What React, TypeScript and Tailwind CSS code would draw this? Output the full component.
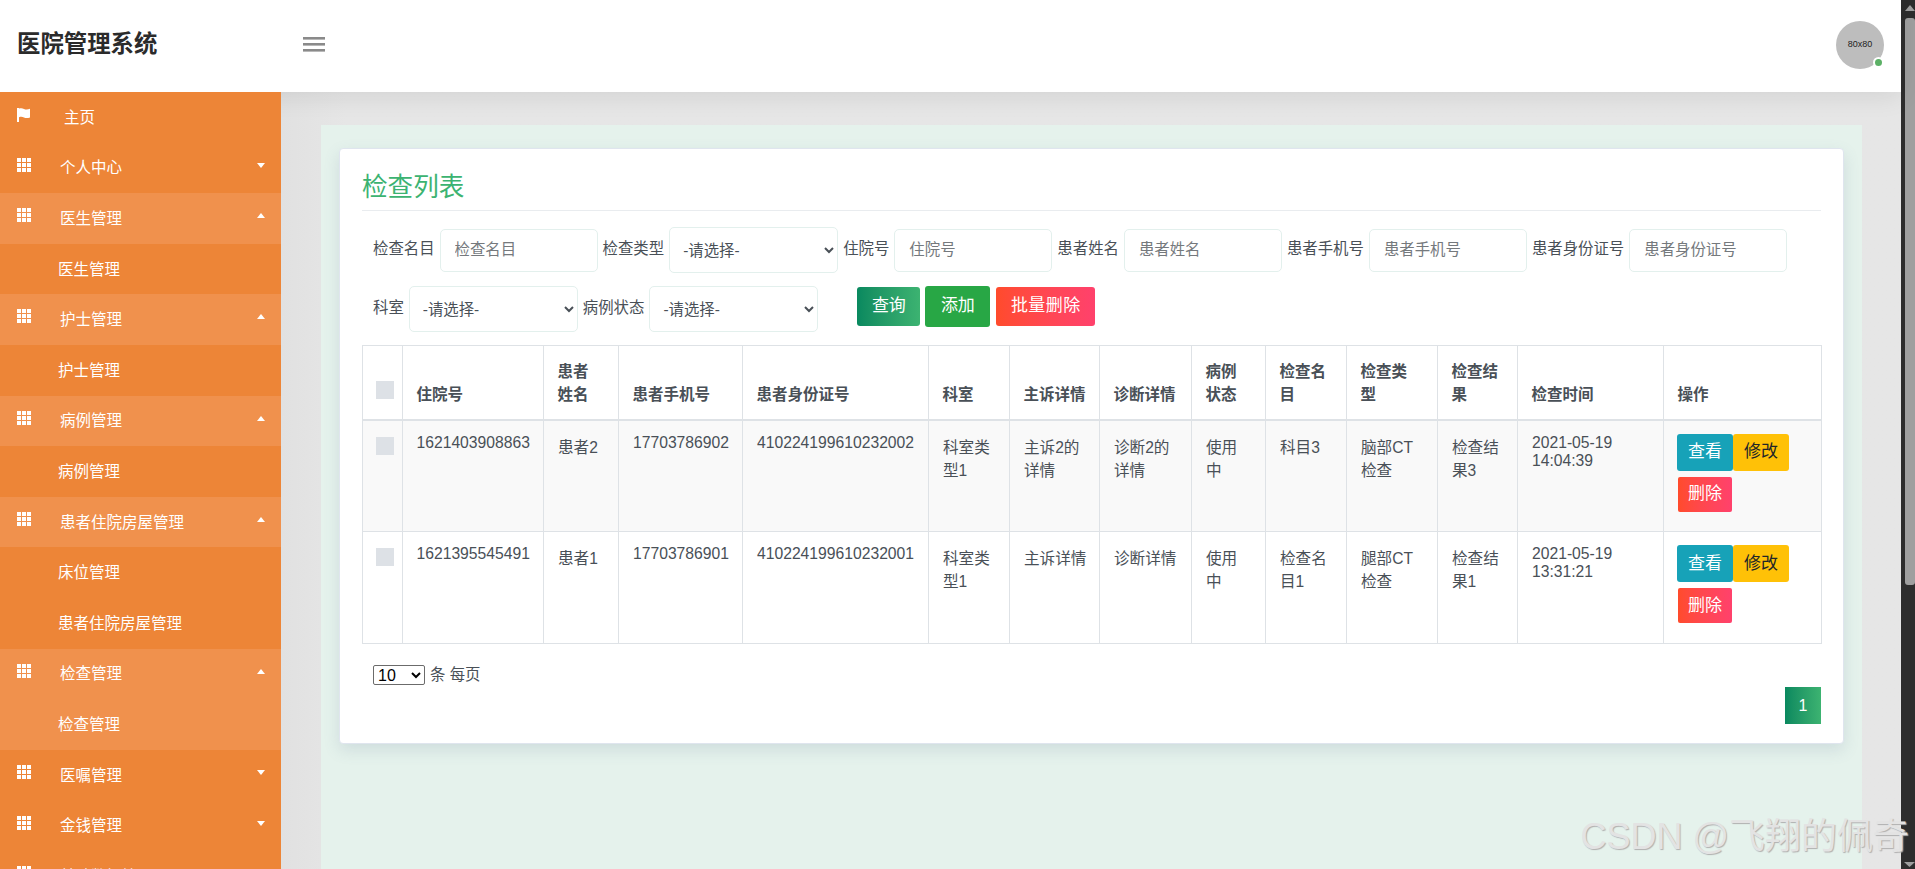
const font = { fontFamily: '"Liberation Sans", "Noto Sans CJK SC", sans-serif' };

interface NavItem {
    label: string;
    kind: "home" | "group" | "sub";
    open?: boolean;
    active?: boolean;
}

const navItems: NavItem[] = [
    { label: "主页", kind: "home" },
    { label: "个人中心", kind: "group" },
    { label: "医生管理", kind: "group", open: true, active: true },
    { label: "医生管理", kind: "sub" },
    { label: "护士管理", kind: "group", open: true, active: true },
    { label: "护士管理", kind: "sub" },
    { label: "病例管理", kind: "group", open: true, active: true },
    { label: "病例管理", kind: "sub" },
    { label: "患者住院房屋管理", kind: "group", open: true, active: true },
    { label: "床位管理", kind: "sub" },
    { label: "患者住院房屋管理", kind: "sub" },
    { label: "检查管理", kind: "group", open: true, active: true },
    { label: "检查管理", kind: "sub", active: true },
    { label: "医嘱管理", kind: "group" },
    { label: "金钱管理", kind: "group" },
    { label: "基础数据管理", kind: "group" },
];

const rows = [
    {
        id: "1621403908863", name: "患者2", phone: "17703786902", card: "410224199610232002",
        complaint: "主诉2的详情", diagnosis: "诊断2的详情", item: "科目3", type: "脑部CT检查",
        result: "检查结果3", date: "2021-05-19", time: "14:04:39", bg: "bg-[#f9f9f9]",
    },
    {
        id: "1621395545491", name: "患者1", phone: "17703786901", card: "410224199610232001",
        complaint: "主诉详情", diagnosis: "诊断详情", item: "检查名目1", type: "腿部CT检查",
        result: "检查结果1", date: "2021-05-19", time: "13:31:21", bg: "bg-white",
    },
];

const headers = ["住院号", "患者\n姓名", "患者手机号", "患者身份证号", "科室", "主诉详情", "诊断详情", "病例\n状态", "检查名\n目", "检查类\n型", "检查结\n果", "检查时间", "操作"];
const colWidths = [40, 141, 75, 124, 186, 81, 90, 92, 74, 81, 91, 80, 146, 158];

function GridIcon() {
    const cells = [0, 5, 10];
    return (
        <svg width="14" height="14" viewBox="0 0 14 14" className="absolute left-[17px] top-[15px]" fill="#fff">
            {cells.map((y) => cells.map((x) => <rect key={`${x}-${y}`} x={x} y={y} width="4" height="4" />))}
        </svg>
    );
}

function FlagIcon() {
    return (
        <svg width="14" height="14" viewBox="0 0 14 14" className="absolute left-[17px] top-[16px]" fill="#fff">
            <path d="M0 0h2v14H0z" />
            <path d="M2 .6c2-.8 3.4-.5 5 .3 1.6.7 3.6.8 6-.1v8.6c-2.4.9-4.4.8-6 .1-1.6-.8-3-1.1-5-.3z" />
        </svg>
    );
}

function Field({ label, width = "w-[158px]" }: { label: string; width?: string }) {
    return (
        <>
            <span className="text-[15.4px] leading-[23px] text-[#495057] -mt-[3px]">{label}</span>
            <input
                placeholder={label}
                className={`${width} h-[43px] rounded-[5px] border border-[#e3f0ed] bg-white px-[14px] text-[15.4px] text-[#495057] outline-none placeholder:text-[#75797d]`}
            />
        </>
    );
}

function Choice({ label }: { label: string }) {
    return (
        <>
            <span className="text-[15.4px] leading-[23px] text-[#495057] -mt-[3px]">{label}</span>
            <select className="w-[169px] h-[46px] rounded-[5px] border border-[#e3f0ed] bg-white pl-[9px] pr-1 text-[15.4px] text-[#495057] outline-none">
                <option>-请选择-</option>
            </select>
        </>
    );
}

function Cjk({ children }: { children: React.ReactNode }) {
    return <div className="pt-[2px] text-[15.6px] leading-[23px]">{children}</div>;
}

export default function App() {
    return (
        <div className="relative flex h-screen overflow-hidden bg-[#e6e6e6]" style={font}>
            <div className="flex min-w-0 flex-1 flex-col">
                {/* Header */}
                <header className="relative z-20 flex h-[92px] shrink-0 items-center bg-white shadow-[0_4px_24px_rgba(0,0,0,0.09)]">
                    <div className="w-[281px] pl-[17px] text-[23.4px] font-bold text-[#2b2b2b] -mt-[3px]">医院管理系统</div>
                    <svg width="22" height="15" viewBox="0 0 22 15" className="ml-[22px] -mt-[3px]" fill="#8a8a8a">
                        <rect x="0" y="0" width="22" height="2.6" />
                        <rect x="0" y="6" width="22" height="2.6" />
                        <rect x="0" y="12" width="22" height="2.6" />
                    </svg>
                    <div className="relative ml-auto mr-[17px] flex h-[48px] w-[48px] -mt-[2px] items-center justify-center rounded-full bg-[#bdbdbd] text-[9px] text-[#222]">
                        80x80
                        <span className="absolute bottom-[1px] right-[0px] box-content h-[7px] w-[7px] rounded-full border-2 border-white bg-[#5cb066]" />
                    </div>
                </header>

                <div className="flex min-h-0 flex-1">
                    {/* Sidebar */}
                    <aside className="relative z-30 w-[281px] shrink-0 overflow-hidden bg-[#ed8537] text-[15.5px] text-white">
                        {navItems.map((item, i) => (
                            <div
                                key={i}
                                className={`relative flex h-[50.62px] items-center ${item.active ? "bg-[#f0914d]" : ""} ${item.kind === "sub" ? "pl-[58px]" : item.kind === "home" ? "pl-[64px]" : "pl-[60px]"}`}
                            >
                                {item.kind === "home" && <FlagIcon />}
                                {item.kind === "group" && <GridIcon />}
                                <span>{item.label}</span>
                                {item.kind === "group" && (
                                    <svg width="8" height="5" viewBox="0 0 8 5" className="absolute right-[16px] top-[20px]" fill="#fff">
                                        <path d={item.open ? "M0 5 L4 0 L8 5 Z" : "M0 0 L8 0 L4 5 Z"} />
                                    </svg>
                                )}
                            </div>
                        ))}
                    </aside>

                    {/* Main */}
                    <main className="min-w-0 flex-1 bg-gradient-to-r from-[#e1e1e1] to-[#e6e6e6] to-[4%] px-[40px] pt-[33px] pr-[39px]">
                        <div className="h-full bg-[#e5f2ec] px-[18px] pt-[23px]">
                            <div className="h-[596px] rounded-[4px] border border-[#dfe5ee] bg-white px-[22px] shadow-[0_6px_16px_rgba(90,110,140,0.16)]">
                                <h2 className="flex h-[62px] items-end border-b border-[#e9ecef] pb-[5px] text-[25.6px] leading-[36px] text-[#3cb371]">检查列表</h2>

                                {/* Search form */}
                                <div className="mt-[16px] flex h-[46px] items-center gap-[5px] pl-[11px]">
                                    <Field label="检查名目" />
                                    <Choice label="检查类型" />
                                    <Field label="住院号" />
                                    <Field label="患者姓名" />
                                    <Field label="患者手机号" />
                                    <Field label="患者身份证号" />
                                </div>
                                <div className="mt-[13px] flex h-[46px] items-center gap-[5px] pl-[11px]">
                                    <Choice label="科室" />
                                    <Choice label="病例状态" />
                                    <button className="ml-[34px] h-[39px] w-[63px] -mt-[6px] rounded-[3px] bg-gradient-to-r from-[#08895f] to-[#3cb371] text-[17px] text-white">查询</button>
                                    <button className="h-[41px] w-[65px] -mt-[6px] rounded-[3px] bg-[#28a745] text-[17px] text-white">添加</button>
                                    <button className="h-[39px] w-[99px] -mt-[6px] ml-[1px] rounded-[3px] bg-gradient-to-r from-[#ff4b2b] to-[#ff416c] text-[17px] tracking-[0.5px] text-white">批量删除</button>
                                </div>

                                {/* Table */}
                                <table className="mt-[13px] w-[1460px] table-fixed border-collapse text-[15.7px] text-[#495057]">
                                    <colgroup>
                                        {colWidths.map((w, i) => (
                                            <col key={i} style={{ width: w }} />
                                        ))}
                                    </colgroup>
                                    <thead>
                                        <tr className="h-[74px]">
                                            <th className="border border-b-2 border-[#dee2e6] pl-[13px] pr-[8px] pb-[20px] align-bottom">
                                                <div className="h-[18px] w-[18px] bg-[#dde1e6]" />
                                            </th>
                                            {headers.map((h) => (
                                                <th key={h} className="whitespace-pre-line border border-b-2 border-[#dee2e6] pl-[13.5px] pr-[8px] pb-[13px] text-left align-bottom text-[15.5px] font-bold leading-[23px]">{h}</th>
                                            ))}
                                        </tr>
                                    </thead>
                                    <tbody>
                                        {rows.map((r) => (
                                            <tr key={r.id} className={`h-[112px] align-top leading-[18px] ${r.bg}`}>
                                                <td className="border border-[#dee2e6] pl-[13px] pr-[8px] pt-[16px]">
                                                    <div className="h-[18px] w-[18px] bg-[#dde1e6]" />
                                                </td>
                                                <td className="border border-[#dee2e6] pl-[13.5px] pr-[8px] pt-[13px]">{r.id}</td>
                                                <td className="border border-[#dee2e6] px-[14px] pt-[13px]"><Cjk>{r.name}</Cjk></td>
                                                <td className="border border-[#dee2e6] px-[14px] pt-[13px]">{r.phone}</td>
                                                <td className="border border-[#dee2e6] px-[14px] pt-[13px]">{r.card}</td>
                                                <td className="border border-[#dee2e6] px-[14px] pt-[13px]"><Cjk>科室类型1</Cjk></td>
                                                <td className="border border-[#dee2e6] pl-[14px] pr-[10px] pt-[13px]"><Cjk>{r.complaint}</Cjk></td>
                                                <td className="border border-[#dee2e6] pl-[14px] pr-[10px] pt-[13px]"><Cjk>{r.diagnosis}</Cjk></td>
                                                <td className="border border-[#dee2e6] px-[14px] pt-[13px]"><Cjk>使用中</Cjk></td>
                                                <td className="border border-[#dee2e6] px-[14px] pt-[13px]"><Cjk>{r.item}</Cjk></td>
                                                <td className="border border-[#dee2e6] px-[14px] pt-[13px]"><Cjk>{r.type}</Cjk></td>
                                                <td className="border border-[#dee2e6] px-[14px] pt-[13px]"><Cjk>{r.result}</Cjk></td>
                                                <td className="border border-[#dee2e6] px-[14px] pt-[13px]">{r.date}<br />{r.time}</td>
                                                <td className="border border-[#dee2e6] px-[13px] pt-[13px]">
                                                    <div className="flex flex-wrap text-[17px]">
                                                        <button className="h-[37px] w-[56px] rounded-[3px] bg-[#17a2b8] text-white">查看</button>
                                                        <button className="h-[37px] w-[56px] rounded-[3px] bg-[#ffc107] text-[#212529]">修改</button>
                                                        <button className="ml-[1px] mt-[6px] h-[35px] w-[54px] rounded-[2px] bg-gradient-to-r from-[#ff4b2b] to-[#ff416c] text-white">删除</button>
                                                    </div>
                                                </td>
                                            </tr>
                                        ))}
                                    </tbody>
                                </table>

                                {/* Pagination */}
                                <div className="mt-[21px] flex h-[20px] items-center gap-[5px] pl-[11px] text-[15.4px] text-[#495057]">
                                    <select className="h-[20px] w-[52px] rounded-[2px] border border-[#6b6b6b] bg-white text-[16px] text-black">
                                        <option>10</option>
                                    </select>
                                    <span>条 每页</span>
                                </div>
                                <div className="mt-[2px] flex justify-end">
                                    <div className="flex h-[37px] w-[36px] items-center justify-center bg-gradient-to-r from-[#08895f] to-[#3cb371] text-[16px] text-white">1</div>
                                </div>
                            </div>
                        </div>
                    </main>
                </div>
            </div>

            {/* Browser scrollbar */}
            <div className="flex w-[14px] shrink-0 flex-col items-end bg-[#2d2d2d]">
                <svg width="10" height="6" viewBox="0 0 10 6" className="mt-[5px] mb-[7px]" fill="#9f9f9f">
                    <path d="M5 0 L10 6 L0 6 Z" />
                </svg>
                <div className="h-[567px] w-[10px] rounded-[3px] bg-[#9f9f9f]" />
                <svg width="11" height="5" viewBox="0 0 11 5" className="mt-auto mb-[2px]" fill="#9f9f9f">
                    <path d="M0 0 L11 0 L5.5 5 Z" />
                </svg>
            </div>

            {/* Image watermark */}
            <div className="pointer-events-none absolute bottom-[9px] right-[6px] z-40 whitespace-nowrap text-[36px] leading-[46px] text-[#e3e3e3] [text-shadow:1px_1px_1px_#b0b0b0]">
                CSDN @飞翔的佩奇
            </div>
        </div>
    );
}
